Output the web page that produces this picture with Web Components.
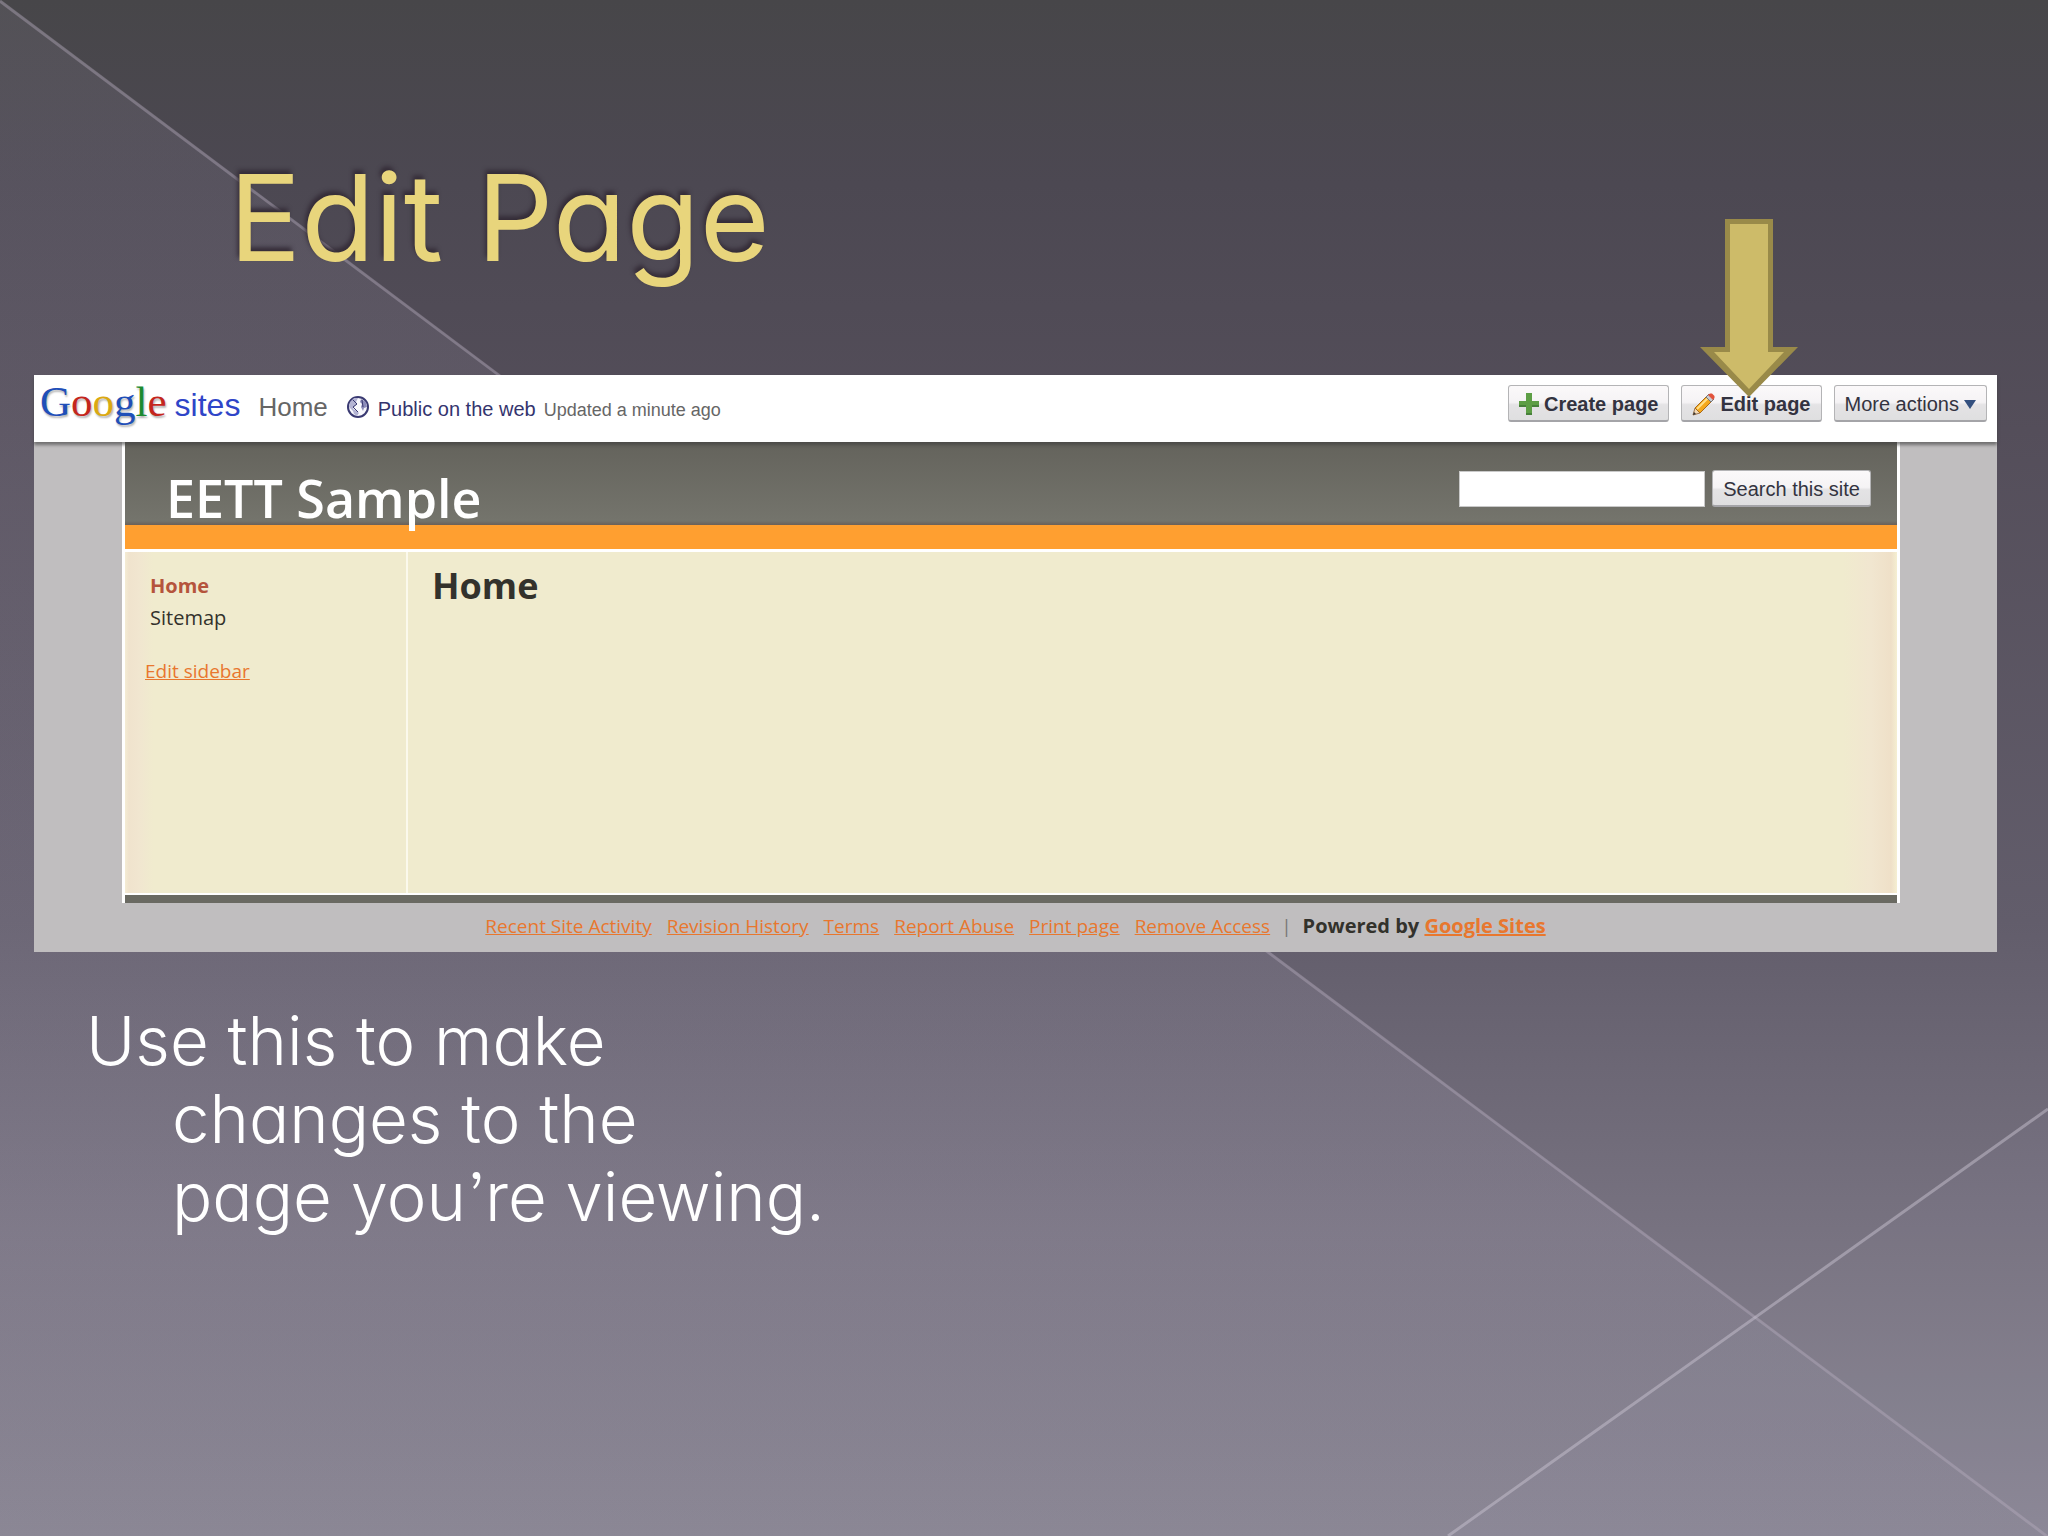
<!DOCTYPE html>
<html lang="en">
<head>
<meta charset="utf-8">
<title>Edit Page</title>
<style>
    body {
        margin: 0;
        font-family: "Liberation Sans", Arial, sans-serif;
    }
</style>
</head>
<body>
<slide-page>
    <slide-title slot="title">Edit Page</slide-title>
    <site-window>
        <site-toolbar slot="toolbar"></site-toolbar>
        <site-header slot="header">EETT Sample</site-header>
        <site-sidebar slot="sidebar"></site-sidebar>
        <site-content slot="content">Home</site-content>
        <site-footer slot="footer"></site-footer>
    </site-window>
    <slide-note slot="note">Use this to make<br>changes to the<br>page you’re viewing.</slide-note>
</slide-page>

<script>
class SlidePage extends HTMLElement {
    connectedCallback() {
        this.attachShadow({ mode: 'open' });
        this.shadowRoot.innerHTML = `
            <style>
                :host {
                    display: block;
                    position: relative;
                    box-sizing: border-box;
                    min-height: 100vh;
                    overflow: hidden;
                    background: linear-gradient(#474649 0%, #4c4852 12%, #544e5a 28%, #625d6b 60%, #777280 80%, #8b8795 100%);
                }

                .lines {
                    position: absolute;
                    inset: 0;
                    width: 100%;
                    height: 100%;
                }

                .content {
                    position: relative;
                    display: flex;
                    flex-direction: column;
                    padding: 135px 51px 0 34px;
                }
            </style>
            <svg class="lines" viewBox="0 0 2048 1536" preserveAspectRatio="none" aria-hidden="true">
                <defs>
                    <linearGradient id="fade" x1="0" y1="0" x2="0" y2="1">
                        <stop offset="0" stop-color="#bcb4cc" stop-opacity="0.1"/>
                        <stop offset="0.8" stop-color="#bcb4cc" stop-opacity="0.12"/>
                        <stop offset="1" stop-color="#bcb4cc" stop-opacity="0"/>
                    </linearGradient>
                </defs>
                <path d="M0 0L2048 1536H0Z" fill="url(#fade)"/>
                <path d="M2048 1110V1536H1448Z" fill="#bcb4cc" fill-opacity="0.04"/>
                <path d="M0 1L2048 1537" stroke="#b8b0c0" stroke-opacity="0.4" stroke-width="3"/>
                <path d="M2048 1109L1448 1536" stroke="#c8c2d0" stroke-opacity="0.5" stroke-width="3"/>
            </svg>
            <div class="content">
                <slot name="title"></slot>
                <slot></slot>
                <slot name="note"></slot>
            </div>
        `;
    }
}

class SlideTitle extends HTMLElement {
    connectedCallback() {
        this.attachShadow({ mode: 'open' });
        this.shadowRoot.innerHTML = `
            <style>
                :host {
                    display: block;
                    height: 240px;
                    padding-left: 195px;
                }

                h1 {
                    margin: 0;
                    font: 400 120px/166px Inter, Lato, sans-serif;
                    font-feature-settings: "cv11", "ss03";
                    color: #e8d57c;
                    text-shadow: -2px -4px 4px #352d38;
                }
            </style>
            <h1><slot></slot></h1>
        `;
    }
}

class SlideNote extends HTMLElement {
    connectedCallback() {
        this.attachShadow({ mode: 'open' });
        this.shadowRoot.innerHTML = `
            <style>
                :host {
                    display: block;
                    padding: 50px 0 0 138px;
                }

                p {
                    margin: 0;
                    font: 300 67px/78px Inter, Lato, sans-serif;
                    font-feature-settings: "cv11", "ss03";
                    text-indent: -86px;
                    color: #fff;
                }
            </style>
            <p><slot></slot></p>
        `;
    }
}

class SiteWindow extends HTMLElement {
    connectedCallback() {
        this.attachShadow({ mode: 'open' });
        this.shadowRoot.innerHTML = `
            <style>
                :host {
                    display: block;
                    background: #c0bebf;
                    font-family: "Open Sans", "Noto Sans", sans-serif;
                    color: #33322c;
                }

                .page {
                    margin: 0 97px 0 88px;
                    border: solid #fff;
                    border-width: 0 3px;
                }

                .columns {
                    display: grid;
                    grid-template-columns: 281px 1fr;
                    min-height: 341px;
                    border-top: 3px solid #fff;
                    border-bottom: 2px solid #fff;
                    background:
                        linear-gradient(90deg, #f4ecd4 0, #f0e3cd 4px, #f1e6d0 14px, transparent 28px),
                        linear-gradient(270deg, #f5efd2 0, #efe0c8 6px, #f1e6d0 26px, transparent 54px),
                        #f0ebce;
                }

                .bar {
                    height: 8px;
                    background: #6a6a62;
                }
            </style>
            <slot name="toolbar"></slot>
            <div class="page">
                <slot name="header"></slot>
                <div class="columns">
                    <slot name="sidebar"></slot>
                    <slot name="content"></slot>
                </div>
                <div class="bar"></div>
            </div>
            <slot name="footer"></slot>
        `;
    }
}

class SiteToolbar extends HTMLElement {
    connectedCallback() {
        this.attachShadow({ mode: 'open' });
        this.shadowRoot.innerHTML = `
            <style>
                :host {
                    display: flex;
                    justify-content: space-between;
                    align-items: flex-start;
                    position: relative;
                    height: 67px;
                    padding: 0 10px 0 6px;
                    background: #fff;
                    box-shadow: 0 3px 3px rgba(60, 60, 60, 0.6);
                    font-family: "Liberation Sans", Arial, sans-serif;
                }

                .info {
                    display: flex;
                    align-items: baseline;
                }

                .logo {
                    font: 43px/54px "Liberation Serif", "Times New Roman", serif;
                    text-decoration: none;
                    text-shadow: 1px 2px 2px rgba(0, 0, 0, 0.3);
                }

                .blue { color: #1f4fb8; }
                .red { color: #c4261d; }
                .yellow { color: #dba911; }
                .green { color: #1b8a2f; }

                .sites {
                    margin-left: 8px;
                    font-size: 32px;
                    color: #2f45c8;
                    text-decoration: none;
                }

                .where {
                    margin-left: 18px;
                    font-size: 26px;
                    color: #666;
                }

                .globe {
                    align-self: center;
                    margin: 10px 8px 0 18px;
                }

                .public {
                    font-size: 20px;
                    color: #34346e;
                    text-decoration: none;
                }

                .updated {
                    margin-left: 8px;
                    font-size: 18px;
                    color: #666;
                }

                .actions {
                    display: flex;
                    gap: 12px;
                    padding-top: 10px;
                }
            </style>
            <div class="info">
                <a class="logo" href="#" aria-label="Google"><span class="blue">G</span><span class="red">o</span><span class="yellow">o</span><span class="blue">g</span><span class="green">l</span><span class="red">e</span></a>
                <a class="sites" href="#">sites</a>
                <span class="where">Home</span>
                <svg class="globe" width="24" height="24" viewBox="0 0 24 24" aria-hidden="true">
                    <circle cx="12" cy="12" r="10" fill="#f8f8fd" stroke="#3a3a72" stroke-width="2"/>
                    <path d="M4 7L8 3L12 3L10 7L11 9L8 12L7 14L11 16L13 18L11 21L8 19L7 16L3 12Z" fill="#b4b4d4"/>
                    <path d="M15 4L20 7L21 12L18 13L17 16L15 12L16 9L14 7Z" fill="#8c8cba"/>
                    <path d="M7 5L11 9L7 12L12 17M16 5L17 12" fill="none" stroke="#3a3a72"/>
                </svg>
                <a class="public" href="#">Public on the web</a>
                <span class="updated">Updated a minute ago</span>
            </div>
            <div class="actions">
                <tool-button strong>
                    <svg slot="icon" width="20" height="22" viewBox="0 0 20 22" aria-hidden="true">
                        <path d="M7 0H13V8H20V14H13V22H7V14H0V8H7Z" fill="#5d9e45"/>
                        <path d="M7 22V20H13V22ZM0 14V12H7V14ZM13 14V12H20V14Z" fill="#47803a"/>
                    </svg>
                    Create page
                </tool-button>
                <tool-button strong pointed>
                    <svg slot="icon" width="23" height="23" viewBox="0 0 23 23" aria-hidden="true">
                        <path d="M1 22L3 15L8 20Z" fill="#f3d9b4" stroke="#9a7048"/>
                        <path d="M3 15L15 3L20 8L8 20Z" fill="#f5a81c" stroke="#a8691a"/>
                        <path d="M5 16L16 5" stroke="#ffe08a" stroke-width="2"/>
                        <path d="M14 4L17 1L22 6L19 9Z" fill="#c9ccd2" stroke="#777"/>
                        <path d="M16 2L18 0.5H20L22.5 3V5L21 7Z" fill="#e2533c"/>
                        <path d="M1 22L2 19L4 21Z" fill="#333"/>
                    </svg>
                    Edit page
                </tool-button>
                <tool-button>
                    More actions
                    <svg slot="after" width="12" height="9" viewBox="0 0 12 9" aria-hidden="true">
                        <path d="M0 0H12L6 9Z" fill="#33507f"/>
                    </svg>
                </tool-button>
            </div>
        `;
    }
}

class ToolButton extends HTMLElement {
    connectedCallback() {
        this.attachShadow({ mode: 'open' });
        this.shadowRoot.innerHTML = `
            <style>
                :host {
                    display: block;
                    position: relative;
                }

                button {
                    display: flex;
                    align-items: center;
                    gap: 5px;
                    height: 37px;
                    padding: 2px 10px 0;
                    border: 1px solid #b4b4b6;
                    border-bottom: 2px solid #a4a4a8;
                    border-radius: 3px;
                    background: linear-gradient(#fbf9fa 0%, #f5f3f5 48%, #e4e3e5 55%, #dfdfe0 100%);
                    font: 20px "Liberation Sans", Arial, sans-serif;
                    color: #333340;
                    white-space: nowrap;
                    cursor: pointer;
                }

                :host([strong]) button {
                    font-weight: bold;
                }

                .arrow {
                    display: none;
                    position: absolute;
                    left: 50%;
                    bottom: 25px;
                    margin-left: -51px;
                }

                :host([pointed]) .arrow {
                    display: block;
                }
            </style>
            <button type="button"><slot name="icon"></slot><span><slot></slot></span><slot name="after"></slot></button>
            <svg class="arrow" width="98" height="178" viewBox="0 0 98 178" aria-hidden="true">
                <path d="M25 0H73V128H98L49 178L0 128H25Z" fill="#998a49"/>
                <path d="M30 5H68V133H84L49 170L14 133H30Z" fill="#cdbb69"/>
            </svg>
        `;
    }
}

class SiteHeader extends HTMLElement {
    connectedCallback() {
        this.attachShadow({ mode: 'open' });
        this.shadowRoot.innerHTML = `
            <style>
                :host {
                    display: flex;
                    justify-content: space-between;
                    align-items: flex-start;
                    height: 83px;
                    padding: 0 26px 0 41px;
                    border-bottom: 24px solid #ff9f30;
                    background: linear-gradient(#64635c, #74746c 95%, #6b6058);
                }

                h2 {
                    margin: 22px 0 0;
                    font-size: 52px;
                    line-height: 68px;
                    font-weight: 600;
                    color: #fff;
                }

                form {
                    display: flex;
                    align-items: center;
                    gap: 7px;
                    padding-top: 28px;
                }

                input {
                    box-sizing: border-box;
                    width: 246px;
                    height: 36px;
                    border: 1px solid #c9c9c9;
                    background: #fff;
                    font-size: 20px;
                }
            </style>
            <h2><slot></slot></h2>
            <form>
                <input type="text" aria-label="Search this site">
                <tool-button>Search this site</tool-button>
            </form>
        `;
    }
}

class SiteSidebar extends HTMLElement {
    connectedCallback() {
        this.attachShadow({ mode: 'open' });
        this.shadowRoot.innerHTML = `
            <style>
                :host {
                    display: block;
                    padding: 18px 0 0 20px;
                }

                ul {
                    margin: 0 0 24px;
                    padding: 0 0 0 5px;
                    list-style: none;
                }

                li {
                    font-size: 20px;
                    line-height: 32px;
                }

                li a {
                    color: #33322c;
                    text-decoration: none;
                }

                li a.current {
                    font-weight: bold;
                    color: #b5543c;
                }

                .edit {
                    font-size: 19px;
                    color: #e8772e;
                }
            </style>
            <ul>
                <li><a class="current" href="#">Home</a></li>
                <li><a href="#">Sitemap</a></li>
            </ul>
            <a class="edit" href="#">Edit sidebar</a>
        `;
    }
}

class SiteContent extends HTMLElement {
    connectedCallback() {
        this.attachShadow({ mode: 'open' });
        this.shadowRoot.innerHTML = `
            <style>
                :host {
                    display: block;
                    padding: 9px 24px;
                    border-left: 2px solid #fbf9ec;
                }

                h3 {
                    margin: 0;
                    font-size: 36px;
                    line-height: 50px;
                    font-weight: bold;
                }
            </style>
            <h3><slot></slot></h3>
        `;
    }
}

class SiteFooter extends HTMLElement {
    connectedCallback() {
        const links = ['Recent Site Activity', 'Revision History', 'Terms', 'Report Abuse', 'Print page', 'Remove Access'];

        this.attachShadow({ mode: 'open' });
        this.shadowRoot.innerHTML = `
            <style>
                :host {
                    display: flex;
                    justify-content: center;
                    gap: 15px;
                    height: 49px;
                    font-size: 19px;
                    line-height: 46px;
                }

                a {
                    color: #e8772e;
                }

                b {
                    font-size: 20px;
                }

                .divider {
                    margin: 0 -4px;
                    color: #777;
                }
            </style>
            ${links.map(text => `<a href="#">${text}</a>`).join('')}
            <span class="divider">|</span>
            <b>Powered by <a href="#">Google Sites</a></b>
        `;
    }
}

customElements.define('slide-page', SlidePage);
customElements.define('slide-title', SlideTitle);
customElements.define('slide-note', SlideNote);
customElements.define('site-window', SiteWindow);
customElements.define('tool-button', ToolButton);
customElements.define('site-toolbar', SiteToolbar);
customElements.define('site-header', SiteHeader);
customElements.define('site-sidebar', SiteSidebar);
customElements.define('site-content', SiteContent);
customElements.define('site-footer', SiteFooter);
</script>
</body>
</html>
